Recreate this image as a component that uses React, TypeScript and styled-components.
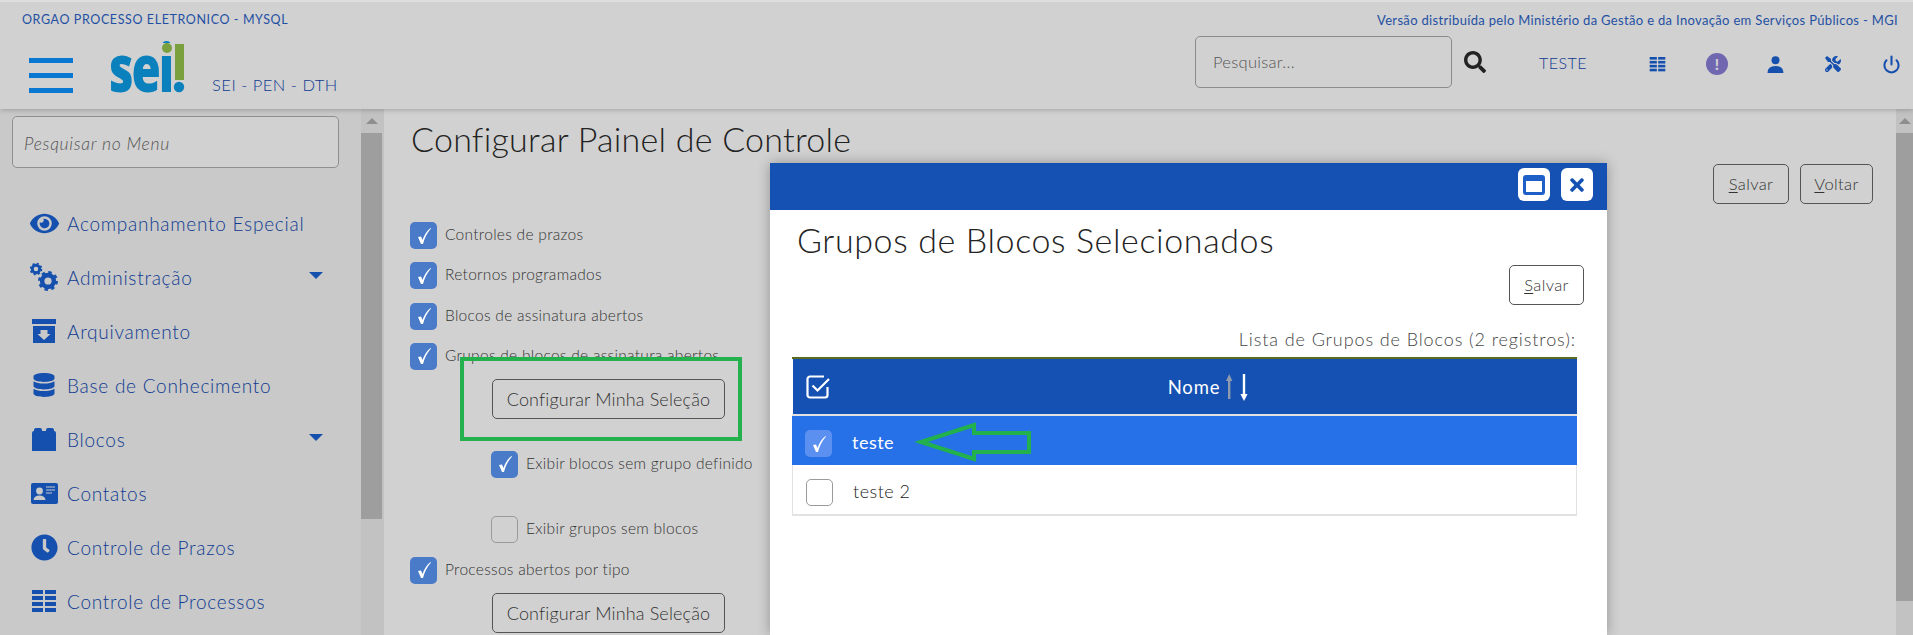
import React from "react";
import styled, { createGlobalStyle } from "styled-components";
import { FaEye, FaDatabase, FaClock, FaSearch, FaTools, FaTimes } from "react-icons/fa";
import { FiPower } from "react-icons/fi";

const Global = createGlobalStyle`
  html, body { margin: 0; padding: 0; background: #d1d1d1; overflow: hidden; }
  * { box-sizing: border-box; }
  body { font-family: "Lato", "Open Sans", sans-serif; }
`;

const BLUE = "#1650ae";
const TEXT_BLUE = "#1f50a3";
const GREEN = "#22b14c";

const Page = styled.div`
  position: relative;
  width: 1913px;
  height: 635px;
  overflow: hidden;
  display: flex;
  flex-direction: column;
  background: #d1d1d1;
`;
const Header = styled.header`
  height: 109px;
  flex: none;
  border-top: 2px solid #dedede;
  background: #d1d1d1;
  box-shadow: 0 1px 5px rgba(0, 0, 0, 0.22);
  position: relative;
  z-index: 1;
`;
const TopLine = styled.div`
  height: 26px;
  padding: 11px 15px 0 22px;
  display: flex;
  justify-content: space-between;
  line-height: 14px;
  color: ${TEXT_BLUE};
`;
const OrgName = styled.span`
  font-size: 12.5px;
  letter-spacing: 0.6px;
`;
const Distribution = styled.span`
  font-size: 13px;
  letter-spacing: 0.33px;
`;
const MainBar = styled.div`
  display: flex;
  align-items: flex-start;
  height: 81px;
`;
const Hamburger = styled.div`
  margin: 30px 0 0 29px;
  width: 44px;
  display: flex;
  flex-direction: column;
  gap: 10px;
  & > i { display: block; height: 5px; background: #0a77d0; }
`;
const Logo = styled.div`
  position: relative;
  margin: 15px 0 0 37px;
  width: 74px;
  height: 50px;
`;
const LogoWord = styled.span`
  position: absolute;
  left: -1px;
  top: -10px;
  font-family: "Open Sans", sans-serif;
  font-weight: 800;
  font-size: 66px;
  line-height: 66px;
  letter-spacing: -3px;
  color: #0a80bd;
  transform: scaleX(0.72);
  transform-origin: left top;
`;
const LogoMark = styled.svg`
  position: absolute;
  left: 0;
  top: 0;
`;
const SiteName = styled.span`
  margin: 47px 0 0 28px;
  line-height: 20px;
  font-size: 16.5px;
  font-weight: 300;
  letter-spacing: 0.5px;
  color: #0f3a92;
`;
const RightGroup = styled.div`
  margin-left: auto;
  display: flex;
  align-items: flex-start;
`;
const SearchBox = styled.div`
  margin-top: 8px;
  width: 257px;
  height: 52px;
  border: 1px solid #8b8b8b;
  border-radius: 5px;
  padding-left: 17px;
  display: flex;
  align-items: center;
  font-size: 16.5px;
  font-weight: 300;
  color: #555;
  letter-spacing: 0.3px;
`;
const SearchGlyph = styled.div`
  margin: 23px 0 0 12px;
  color: #222;
  display: flex;
  font-size: 22px;
`;
const UserName = styled.span`
  margin: 25px 0 0 27px;
  width: 100px;
  text-align: center;
  line-height: 20px;
  font-size: 16px;
  font-weight: 300;
  letter-spacing: 0.5px;
  color: #0f3a92;
`;
const IconStrip = styled.div`
  margin: 25px 11px 0 35px;
  display: flex;
  gap: 36px;
`;
const IconSlot = styled.span`
  width: 22px;
  height: 22px;
  display: flex;
  align-items: center;
  justify-content: center;
  color: ${BLUE};
`;
const TableSlot = styled(IconSlot)`
  margin: 0 2px 0 -2px;
`;
const AlertBadge = styled(IconSlot)`
  border-radius: 50%;
  background: #6f68b0;
  color: #d1d1d1;
  font-weight: 900;
  font-size: 15px;
`;

const Body = styled.div`
  flex: 1;
  display: flex;
  min-height: 0;
`;
const Sidebar = styled.aside`
  width: 384px;
  flex: none;
  display: flex;
  background: #c8c9c8;
`;
const SideMain = styled.div`
  width: 361px;
  flex: none;
  padding: 7px 0 0 12px;
`;
const MenuSearch = styled.div`
  width: 327px;
  height: 52px;
  border: 1px solid #8f8f8f;
  border-radius: 5px;
  padding: 3px 0 0 11px;
  display: flex;
  align-items: center;
  font-style: italic;
  font-weight: 300;
  font-size: 17.5px;
  letter-spacing: 0.7px;
  color: #555;
  background: #d1d1d1;
`;
const Menu = styled.nav`
  margin: 28px 0 0 18px;
  width: 300px;
  display: flex;
  flex-direction: column;
`;
const MenuItem = styled.div`
  height: 54px;
  display: flex;
  align-items: center;
  color: ${BLUE};
`;
const MenuIcon = styled.span`
  width: 37px;
  flex: none;
  display: flex;
  align-items: center;
  color: ${BLUE};
`;
const MenuLabel = styled.span`
  font-size: 19px;
  font-weight: 300;
  letter-spacing: 0.74px;
  color: #0f3a92;
`;
const Caret = styled.i`
  margin-left: auto;
  margin-right: 7px;
  margin-top: -4px;
  width: 0;
  height: 0;
  border-left: 7px solid transparent;
  border-right: 7px solid transparent;
  border-top: 7px solid ${BLUE};
`;
const ScrollBar = styled.div<{ $width: number; $thumb: number }>`
  width: ${(p) => p.$width}px;
  flex: none;
  background: #c2c2c2;
  display: flex;
  flex-direction: column;
  align-items: center;
  &::before {
    content: "";
    margin-top: 9px;
    border-left: 6px solid transparent;
    border-right: 6px solid transparent;
    border-bottom: 6px solid #8e8e8e;
  }
  &::after {
    content: "";
    margin-top: 9px;
    width: 100%;
    height: ${(p) => p.$thumb}px;
    background: #9e9e9e;
  }
`;
const Gutter = styled.div`
  width: 2px;
  background: #c2c2c2;
`;

const Content = styled.main`
  flex: 1;
  display: flex;
  min-width: 0;
`;
const ContentMain = styled.div`
  flex: 1;
  padding-left: 26px;
`;
const PageTitle = styled.h1`
  margin: 10px 0 0 1px;
  font-weight: 300;
  font-size: 34px;
  line-height: 40px;
  letter-spacing: 0.25px;
  color: #222;
`;
const ActionBar = styled.div<{ $right: number }>`
  margin-top: 5px;
  display: flex;
  justify-content: flex-end;
  gap: 11px;
  padding-right: ${(p) => p.$right}px;
`;
const Btn = styled.button<{ $w?: number; $bg?: string }>`
  height: 40px;
  width: ${(p) => (p.$w ? `${p.$w}px` : "auto")};
  padding: 0;
  background: ${(p) => p.$bg || "transparent"};
  border: 1px solid #555;
  border-radius: 5px;
  font: inherit;
  font-size: 16.5px;
  font-weight: 300;
  letter-spacing: 0.4px;
  color: #333;
  u { text-underline-offset: 2px; }
`;
const Checklist = styled.div`
  margin-top: 18px;
`;
const CheckRow = styled.div<{ $indent?: boolean; $mt: number }>`
  display: flex;
  align-items: center;
  height: 27px;
  margin-top: ${(p) => p.$mt}px;
  margin-left: ${(p) => (p.$indent ? 81 : 0)}px;
`;
const CheckLabel = styled.span`
  margin-top: -3px;
  font-size: 15.5px;
  font-weight: 300;
  letter-spacing: 0.29px;
  color: #333;
`;
const Box = styled.span<{ $on?: boolean; $bg?: string }>`
  width: 27px;
  height: 27px;
  flex: none;
  margin-right: 8px;
  border-radius: 5px;
  display: flex;
  align-items: center;
  justify-content: center;
  background: ${(p) => p.$bg || (p.$on ? "#4a7bc8" : "transparent")};
  border: ${(p) => (p.$on ? "none" : "1px solid #9a9a9a")};
`;
const ConfigBtn = styled(Btn)`
  display: block;
  width: 233px;
  margin: 9px 0 0 82px;
  font-size: 18px;
  letter-spacing: 0.15px;
`;

const Modal = styled.section`
  position: absolute;
  left: 770px;
  top: 163px;
  width: 837px;
  height: 472px;
  background: #fff;
  box-shadow: 0 0 12px rgba(0, 0, 0, 0.3);
  z-index: 2;
`;
const ModalHead = styled.div`
  height: 47px;
  background: #1451b2;
  padding: 5px 14px 0 0;
  display: flex;
  justify-content: flex-end;
  gap: 11px;
`;
const ModalBtn = styled.span`
  width: 32px;
  height: 33px;
  background: #fff;
  border-radius: 6px;
  display: flex;
  align-items: center;
  justify-content: center;
  color: #1451b2;
`;
const ModalTitle = styled.h2`
  margin: 10px 0 0 27px;
  font-weight: 300;
  font-size: 34px;
  line-height: 40px;
  letter-spacing: 0.62px;
  color: #222;
`;
const Caption = styled.div`
  margin: 23px 31px 0 0;
  line-height: 22px;
  text-align: right;
  font-size: 18px;
  font-weight: 300;
  letter-spacing: 0.9px;
  color: #444;
`;
const Table = styled.div`
  margin: 7px 30px 0 22px;
  border-top: 2px solid #5a6b1f;
`;
const HeadRow = styled.div`
  height: 55px;
  margin-left: 1px;
  background: #1451b2;
  display: flex;
  align-items: center;
  color: #fff;
`;
const HeadCheck = styled.span`
  width: 48px;
  padding-left: 13px;
  display: flex;
`;
const HeadName = styled.span`
  flex: 1;
  display: flex;
  align-items: center;
  justify-content: center;
  gap: 6px;
  font-size: 18.5px;
  letter-spacing: 0.8px;
`;
const BodyRow = styled.div<{ $selected?: boolean }>`
  height: 51px;
  display: flex;
  align-items: center;
  padding: 3px 0 0 13px;
  font-size: 18px;
  font-weight: ${(p) => (p.$selected ? 400 : 300)};
  letter-spacing: 0.5px;
  background: ${(p) => (p.$selected ? "#2670e8" : "#fff")};
  color: ${(p) => (p.$selected ? "#fff" : "#222")};
  border: 1px solid #e2e2e2;
  border-width: ${(p) => (p.$selected ? "2px 0 0" : "0 1px 2px")};
  & > span:first-child { margin: 3px 20px 0 0; }
`;
const CalloutBox = styled.div`
  position: absolute;
  left: 460px;
  top: 357px;
  width: 282px;
  height: 84px;
  border: 4px solid ${GREEN};
  z-index: 1;
`;
const CalloutArrow = styled.svg`
  position: absolute;
  left: 915px;
  top: 420px;
  z-index: 3;
`;

const Tick = ({ color = "#fff" }: { color?: string }) => (
  <svg width="16" height="18" viewBox="0 0 16 18">
    <path d="M2 10 L5 9.5 L6.5 13 C8 8.5 10.5 4 14.5 1 L15 1.5 C11 6 8.5 11 7 17 L5 17 Z" fill={color} />
  </svg>
);

const TableIcon = ({ w, h }: { w: number; h: number }) => (
  <svg width={w} height={h} viewBox="0 0 24 23" fill="currentColor">
    {[0, 6, 12, 18].map((y) => (
      <React.Fragment key={y}>
        <rect x="0" y={y} width="11" height="4" />
        <rect x="13" y={y} width="11" height="4" />
      </React.Fragment>
    ))}
  </svg>
);

const Gear = ({ cx, cy, r }: { cx: number; cy: number; r: number }) => (
  <g fill="none" stroke="currentColor">
    <circle cx={cx} cy={cy} r={r * 0.62} strokeWidth={r * 0.48} />
    <circle
      cx={cx}
      cy={cy}
      r={r * 0.9}
      strokeWidth={r * 0.3}
      strokeDasharray={`${(r * 0.9 * 2 * Math.PI) / 16} ${(r * 0.9 * 2 * Math.PI) / 16}`}
    />
  </g>
);

const CogsIcon = () => (
  <svg width="28" height="30" viewBox="0 0 28 30">
    <Gear cx={6} cy={7} r={6} />
    <Gear cx={18} cy={19} r={9.5} />
  </svg>
);
const ArchiveIcon = () => (
  <svg width="24" height="24" viewBox="0 0 24 24" fill="currentColor" style={{ marginLeft: 2 }}>
    <rect x="0" y="0" width="24" height="5" />
    <path fillRule="evenodd" d="M1 7h22v17H1z M8.5 11v4H5.5l6.5 6 6.5-6h-3v-4z" />
  </svg>
);
const BlocksIcon = () => (
  <svg width="24" height="23" viewBox="0 0 24 23" fill="currentColor" style={{ marginLeft: 2 }}>
    <path d="M0 5 Q0 3 2 3 L2 2 Q2 0 4 0 L8 0 Q10 0 10 2 L10 3 L14 3 L14 2 Q14 0 16 0 L20 0 Q22 0 22 2 L22 3 Q24 3 24 5 L24 23 L0 23 Z" />
  </svg>
);
const CardIcon = () => (
  <svg width="27" height="21" viewBox="0 0 27 21" style={{ marginLeft: 1 }}>
    <rect width="27" height="21" rx="2" fill="currentColor" />
    <circle cx="8.5" cy="8" r="3.4" fill="#c8c9c8" />
    <path d="M2.5 17 Q3 12.5 8.5 12.5 Q14 12.5 14.5 17 Z" fill="#c8c9c8" />
    <path d="M15 4h9M15 7h9M15 10h6" stroke="#c8c9c8" strokeWidth="1.2" />
  </svg>
);
const PersonIcon = () => (
  <svg width="17" height="17" viewBox="0 0 17 17" fill="currentColor">
    <circle cx="8.5" cy="4.2" r="4" />
    <path d="M0.5 17 Q0.5 10 8.5 10 Q16.5 10 16.5 17 Z" />
  </svg>
);

const items = [
  { label: "Acompanhamento Especial", icon: <FaEye size={29} /> },
  { label: "Administração", icon: <CogsIcon />, caret: true },
  { label: "Arquivamento", icon: <ArchiveIcon /> },
  { label: "Base de Conhecimento", icon: <FaDatabase size={24} style={{ marginLeft: 2 }} /> },
  { label: "Blocos", icon: <BlocksIcon />, caret: true },
  { label: "Contatos", icon: <CardIcon /> },
  { label: "Controle de Prazos", icon: <FaClock size={27} style={{ marginLeft: 1 }} /> },
  { label: "Controle de Processos", icon: <span style={{ marginLeft: 2, display: "flex" }}><TableIcon w={24} h={23} /></span> },
];

export default function App() {
  return (
    <Page>
      <Global />
      <Header>
        <TopLine>
          <OrgName>ORGAO PROCESSO ELETRONICO - MYSQL</OrgName>
          <Distribution>Versão distribuída pelo Ministério da Gestão e da Inovação em Serviços Públicos - MGI</Distribution>
        </TopLine>
        <MainBar>
          <Hamburger><i /><i /><i /></Hamburger>
          <Logo>
            <LogoWord>sei</LogoWord>
            <LogoMark width="76" height="50" viewBox="0 0 76 50">
              <circle cx="57" cy="5" r="7" fill="#d1d1d1" />
              <circle cx="57" cy="5" r="5" fill="#7a9f3d" />
              <rect x="65" y="1" width="9" height="36" fill="#7a9f3d" />
              <circle cx="69" cy="44" r="5.2" fill="#0a80bd" />
            </LogoMark>
          </Logo>
          <SiteName>SEI - PEN - DTH</SiteName>
          <RightGroup>
            <SearchBox>Pesquisar...</SearchBox>
            <SearchGlyph><FaSearch /></SearchGlyph>
            <UserName>TESTE</UserName>
            <IconStrip>
              <TableSlot><TableIcon w={17} h={15} /></TableSlot>
              <AlertBadge>!</AlertBadge>
              <IconSlot><PersonIcon /></IconSlot>
              <IconSlot><FaTools size={16} /></IconSlot>
              <IconSlot><FiPower size={19} strokeWidth={2.6} /></IconSlot>
            </IconStrip>
          </RightGroup>
        </MainBar>
      </Header>
      <Body>
        <Sidebar>
          <SideMain>
            <MenuSearch>Pesquisar no Menu</MenuSearch>
            <Menu>
              {items.map((it) => (
                <MenuItem key={it.label}>
                  <MenuIcon>{it.icon}</MenuIcon>
                  <MenuLabel>{it.label}</MenuLabel>
                  {it.caret && <Caret />}
                </MenuItem>
              ))}
            </Menu>
          </SideMain>
          <ScrollBar $width={21} $thumb={386} />
          <Gutter />
        </Sidebar>
        <Content>
          <ContentMain>
            <PageTitle>Configurar Painel de Controle</PageTitle>
            <ActionBar $right={23}>
              <Btn $w={76}><u>S</u>alvar</Btn>
              <Btn $w={73}><u>V</u>oltar</Btn>
            </ActionBar>
            <Checklist>
              <CheckRow $mt={0}><Box $on><Tick /></Box><CheckLabel>Controles de prazos</CheckLabel></CheckRow>
              <CheckRow $mt={13.3}><Box $on><Tick /></Box><CheckLabel>Retornos programados</CheckLabel></CheckRow>
              <CheckRow $mt={13.3}><Box $on><Tick /></Box><CheckLabel>Blocos de assinatura abertos</CheckLabel></CheckRow>
              <CheckRow $mt={13.3}><Box $on><Tick /></Box><CheckLabel>Grupos de blocos de assinatura abertos</CheckLabel></CheckRow>
              <ConfigBtn>Configurar Minha Seleção</ConfigBtn>
              <CheckRow $indent $mt={32}><Box $on><Tick /></Box><CheckLabel>Exibir blocos sem grupo definido</CheckLabel></CheckRow>
              <CheckRow $indent $mt={38}><Box /><CheckLabel>Exibir grupos sem blocos</CheckLabel></CheckRow>
              <CheckRow $mt={14}><Box $on><Tick /></Box><CheckLabel>Processos abertos por tipo</CheckLabel></CheckRow>
              <ConfigBtn>Configurar Minha Seleção</ConfigBtn>
            </Checklist>
          </ContentMain>
          <ScrollBar $width={17} $thumb={468} />
        </Content>
      </Body>

      <CalloutBox />

      <Modal>
        <ModalHead>
          <ModalBtn>
            <svg width="22" height="20" viewBox="0 0 22 20">
              <rect x="1.5" y="1.5" width="19" height="17" rx="1.5" fill="none" stroke="#1e5fc8" strokeWidth="3" />
              <rect x="1" y="1" width="20" height="5" fill="#1e5fc8" />
            </svg>
          </ModalBtn>
          <ModalBtn><FaTimes size={20} /></ModalBtn>
        </ModalHead>
        <ModalTitle>Grupos de Blocos Selecionados</ModalTitle>
        <ActionBar $right={23}>
          <Btn $w={75} $bg="#fff"><u>S</u>alvar</Btn>
        </ActionBar>
        <Caption>Lista de Grupos de Blocos (2 registros):</Caption>
        <Table>
          <HeadRow>
            <HeadCheck>
              <svg width="24" height="24" viewBox="0 0 24 24" fill="none" stroke="#fff" strokeWidth="2.2">
                <path d="M21.5 12v8a2.5 2.5 0 0 1-2.5 2.5H4A2.5 2.5 0 0 1 1.5 20V4A2.5 2.5 0 0 1 4 1.5h14" />
                <path d="M6.5 10.5l5 5L23 4" />
              </svg>
            </HeadCheck>
            <HeadName>
              Nome
              <svg width="24" height="28" viewBox="0 0 24 28">
                <path d="M3.2 26V6" stroke="#8e9aad" strokeWidth="2.4" />
                <path d="M0 8l3.2-7 3.2 7z" fill="#8e9aad" />
                <path d="M18 1v21" stroke="#fff" strokeWidth="2.4" />
                <path d="M14.4 21L18 28l3.6-7z" fill="#fff" />
              </svg>
            </HeadName>
          </HeadRow>
          <BodyRow $selected>
            <Box $on $bg="#5c90f0"><Tick /></Box>teste
          </BodyRow>
          <BodyRow>
            <Box />teste 2
          </BodyRow>
        </Table>
      </Modal>

      <CalloutArrow width="120" height="45" viewBox="0 0 120 45">
        <polygon points="6,22 59,5 59,13 114,13 114,32 59,32 59,39" fill="none" stroke={GREEN} strokeWidth="4" />
      </CalloutArrow>
    </Page>
  );
}
